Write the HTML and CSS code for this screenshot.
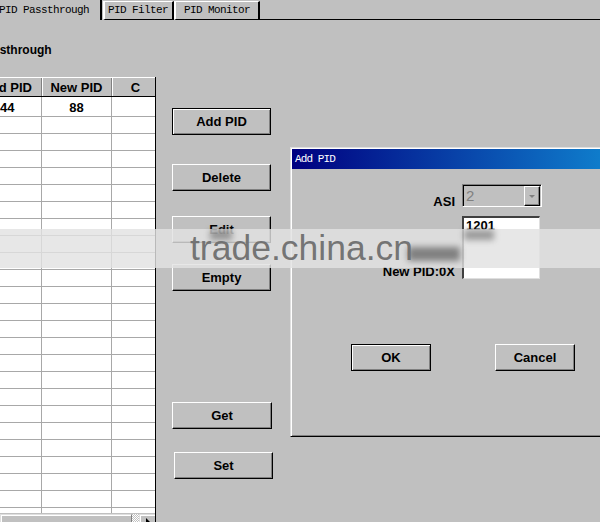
FILE: index.html
```html
<!DOCTYPE html>
<html>
<head>
<meta charset="utf-8">
<link rel="stylesheet" href="styles.css">
</head>
<body>
<div class="tabs">
  <div class="tab tab-active">PID Passthrough</div>
  <div class="tab tab-filter">PID Filter</div>
  <div class="tab tab-monitor">PID Monitor</div>
  <div class="tab-fill"></div>
</div>

<div class="panel">
  <div class="left">
    <h1 class="title">PID Passthrough</h1>
    <div class="grid">
      <div class="grid-scroll">
        <div class="rows">
          <div class="row head"><div class="c c1">Old PID</div><div class="c c2">New PID</div><div class="c c3">C</div></div>
          <div class="row first"><div class="c c1 left-val">44</div><div class="c c2">88</div><div class="c c3"></div></div>
          <div class="row"><div class="c c1"></div><div class="c c2"></div><div class="c c3"></div></div>
          <div class="row"><div class="c c1"></div><div class="c c2"></div><div class="c c3"></div></div>
          <div class="row"><div class="c c1"></div><div class="c c2"></div><div class="c c3"></div></div>
          <div class="row"><div class="c c1"></div><div class="c c2"></div><div class="c c3"></div></div>
          <div class="row"><div class="c c1"></div><div class="c c2"></div><div class="c c3"></div></div>
          <div class="row"><div class="c c1"></div><div class="c c2"></div><div class="c c3"></div></div>
          <div class="row"><div class="c c1"></div><div class="c c2"></div><div class="c c3"></div></div>
          <div class="row"><div class="c c1"></div><div class="c c2"></div><div class="c c3"></div></div>
          <div class="row"><div class="c c1"></div><div class="c c2"></div><div class="c c3"></div></div>
          <div class="row"><div class="c c1"></div><div class="c c2"></div><div class="c c3"></div></div>
          <div class="row"><div class="c c1"></div><div class="c c2"></div><div class="c c3"></div></div>
          <div class="row"><div class="c c1"></div><div class="c c2"></div><div class="c c3"></div></div>
          <div class="row"><div class="c c1"></div><div class="c c2"></div><div class="c c3"></div></div>
          <div class="row"><div class="c c1"></div><div class="c c2"></div><div class="c c3"></div></div>
          <div class="row"><div class="c c1"></div><div class="c c2"></div><div class="c c3"></div></div>
          <div class="row"><div class="c c1"></div><div class="c c2"></div><div class="c c3"></div></div>
          <div class="row"><div class="c c1"></div><div class="c c2"></div><div class="c c3"></div></div>
          <div class="row"><div class="c c1"></div><div class="c c2"></div><div class="c c3"></div></div>
          <div class="row"><div class="c c1"></div><div class="c c2"></div><div class="c c3"></div></div>
          <div class="row"><div class="c c1"></div><div class="c c2"></div><div class="c c3"></div></div>
          <div class="row"><div class="c c1"></div><div class="c c2"></div><div class="c c3"></div></div>
          <div class="row"><div class="c c1"></div><div class="c c2"></div><div class="c c3"></div></div>
          <div class="row"><div class="c c1"></div><div class="c c2"></div><div class="c c3"></div></div>
          <div class="row"><div class="c c1"></div><div class="c c2"></div><div class="c c3"></div></div>
        </div>
      </div>
      <div class="hscroll">
        <div class="hs-thumb"></div>
        <div class="hs-track"></div>
        <div class="hs-btn">
          <svg width="14" height="14" viewBox="0 0 14 14"><polygon points="5,3 9,7 5,11" fill="#000"/></svg>
        </div>
      </div>
    </div>
  </div>

  <div class="buttons">
    <div class="btn btn-default b-add">Add PID</div>
    <div class="btn b-delete">Delete</div>
    <div class="btn b-edit">Edit</div>
    <div class="btn b-empty">Empty</div>
    <div class="btn b-get">Get</div>
    <div class="btn b-set">Set</div>
  </div>
</div>

<div class="dialog">
  <div class="titlebar">Add PID</div>
  <div class="dlg-body">
    <div class="form">
      <span class="lbl">ASI</span>
      <div class="combo">
        <span class="combo-val">2</span>
        <span class="combo-btn">
          <svg width="14" height="16" viewBox="0 0 14 16"><polygon points="4,7 10,7 7,10" fill="#808080"/></svg>
        </span>
      </div>
      <span class="lbl"></span>
      <div class="field field-top">1201</div>
      <span class="lbl">New PID:0X</span>
      <div class="field field-bottom"></div>
    </div>
    <div class="dlg-buttons">
      <div class="btn btn-default btn-dlg">OK</div>
      <div class="btn btn-dlg">Cancel</div>
    </div>
  </div>
</div>

<div class="watermark">
  <span class="smudge smudge-edit"></span>
  <span class="smudge smudge-num"></span>
  <span class="smudge smudge-label"></span>
  <span class="wm-text">trade.china.cn</span>
</div>
</body>
</html>
```

FILE: styles.css
```css
* { box-sizing: border-box; }

html, body { margin: 0; padding: 0; }

body {
  width: 600px;
  height: 522px;
  overflow: hidden;
  position: relative;
  background: #c0c0c0;
  color: #000;
  font: bold 13px "Liberation Sans", Arial, sans-serif;
}

/* ---------- tabs ---------- */
.tabs {
  display: flex;
  align-items: flex-end;
  height: 20px;
}

.tab {
  font: 11px "Liberation Mono", "DejaVu Sans Mono", monospace;
  letter-spacing: -0.6px;
  line-height: 13px;
  white-space: nowrap;
  color: #000;
}

.tab-active {
  height: 20px;
  margin-left: -8px;
  padding: 4px 11px 0 7px;
  border-right: 2px solid #000;
}

.tab-filter,
.tab-monitor {
  height: 19px;
  padding-top: 2px;
  border-top: 1px solid #fff;
  border-left: 2px solid #fff;
  border-right: 2px solid #000;
  border-bottom: 1px solid #000;
}

.tab-filter { margin-left: 1px; padding-left: 3px; padding-right: 4px; }
.tab-monitor { padding-left: 8px; padding-right: 8px; }

.tab-fill {
  flex: 1;
  height: 1px;
  background: #000;
}

/* ---------- panel ---------- */
.panel {
  display: flex;
}

.left {
  width: 156px;
  flex: none;
}

.title {
  margin: 23px 0 0 -45px;
  font: bold 12px "Liberation Sans", Arial, sans-serif;
  line-height: 15px;
  white-space: nowrap;
}

.grid {
  margin-top: 19px;
  width: 156px;
  border-right: 1px solid #000;
}

.grid-scroll {
  height: 436px;
  overflow: hidden;
  background: #fff;
}

.rows {
  margin-left: -24px;
  width: 184px;
}

.row {
  display: flex;
  height: 17px;
  border-bottom: 1px solid #a8a8a8;
}

.row.head {
  height: 20px;
  background: #c0c0c0;
  border-top: 1px solid #fff;
  border-bottom: 1px solid #000;
}

.row.first { height: 20px; }

.c {
  flex: none;
  border-right: 1px solid #a8a8a8;
  text-align: center;
  white-space: nowrap;
  overflow: hidden;
}

.c1 { width: 66px; }
.c2 { width: 70px; }
.c3 { width: 48px; }

.head .c {
  border-right: 1px solid #808080;
  box-shadow: inset 1px 0 #fff;
  padding-top: 1px;
  line-height: 17px;
}

.first .c {
  padding-top: 2px;
  line-height: 17px;
}

.first .left-val {
  text-align: left;
  padding-left: 24px;
}

.hscroll {
  display: flex;
  height: 16px;
  border-top: 1px solid #c0c0c0;
}

.hs-thumb {
  flex: 1;
  background: #c0c0c0;
  border-top: 1px solid #dfdfdf;
  border-left: 1px solid #dfdfdf;
  border-right: 1px solid #808080;
  box-shadow: inset 1px 1px #fff;
}

.hs-track {
  width: 7px;
  background: repeating-conic-gradient(#fff 0 25%, #c0c0c0 0 50%) 0 0 / 2px 2px;
}

.hs-btn {
  width: 16px;
  background: #c0c0c0;
  border-top: 1px solid #dfdfdf;
  border-left: 1px solid #dfdfdf;
  box-shadow: inset 1px 1px #fff;
  display: flex;
  align-items: flex-start;
  justify-content: center;
}

/* ---------- buttons ---------- */
.buttons {
  display: flex;
  flex-direction: column;
  align-items: flex-start;
  padding-left: 16px;
}

.btn {
  width: 100px;
  height: 27px;
  display: flex;
  align-items: center;
  justify-content: center;
  background: #c0c0c0;
  border: 1px solid;
  border-color: #fff #000 #000 #fff;
  box-shadow: inset -1px -1px #808080;
  font: bold 13px "Liberation Sans", Arial, sans-serif;
  white-space: nowrap;
}

.btn-default {
  border-color: #000;
  box-shadow: inset 1px 1px #fff, inset -1px -1px #808080;
}

.b-add { margin-top: 88px; width: 99px; }
.b-delete { margin-top: 29px; width: 99px; }
.b-edit { margin-top: 25px; width: 99px; }
.b-empty { margin-top: 21px; width: 99px; }
.b-get { margin-top: 111px; }
.b-set { margin-top: 23px; margin-left: 2px; width: 99px; }

/* ---------- dialog ---------- */
.dialog {
  position: absolute;
  left: 290px;
  top: 147px;
  width: 330px;
  height: 290px;
  background: #c0c0c0;
  border-top: 1px solid #dfdfdf;
  border-left: 1px solid #dfdfdf;
  border-bottom: 1px solid #000;
  box-shadow: inset 1px 1px #fff, inset 0 -1px #808080;
  padding: 1px 0 0 1px;
}

.titlebar {
  height: 20px;
  padding: 4px 0 0 3px;
  background: linear-gradient(to right, #000080, #1084d0);
  color: #fff;
  font: 11px "Liberation Mono", "DejaVu Sans Mono", monospace;
  letter-spacing: -0.9px;
  line-height: 13px;
  white-space: nowrap;
}

.dlg-body {
  padding-top: 15px;
}

.form {
  display: grid;
  grid-template-columns: 163px 80px;
  grid-template-rows: 32px 32px 31px;
  column-gap: 7px;
}

.form .combo { margin-bottom: 9px; }

.lbl {
  text-align: right;
  white-space: nowrap;
  line-height: 15px;
}

.lbl:nth-child(1) { align-self: start; padding-top: 10px; }
.lbl:nth-child(5) { align-self: end; margin-bottom: 0; }

.combo {
  height: 23px;
  display: flex;
  align-items: center;
  justify-content: space-between;
  border-top: 1px solid #808080;
  border-left: 1px solid #808080;
  border-right: 1px solid #fff;
  border-bottom: 1px solid #fff;
  box-shadow: inset 1px 1px #000;
  padding: 1px 1px 1px 3px;
}

.combo-val {
  font: 15px "Liberation Sans", Arial, sans-serif;
  color: #808080;
  line-height: 17px;
}

.combo-btn {
  width: 16px;
  height: 20px;
  display: flex;
  align-items: center;
  justify-content: center;
  background: #c0c0c0;
  border: 1px solid;
  border-color: #fff #000 #000 #fff;
  box-shadow: inset -1px -1px #808080;
}

.field {
  width: 78px;
  background: #fff;
  border-left: 2px solid #404040;
  border-right: 1px solid #dfdfdf;
  padding: 0 2px;
  line-height: 15px;
}

.field-top {
  border-top: 2px solid #404040;
}

.field-bottom {
  border-bottom: 1px solid #dfdfdf;
}

.dlg-buttons {
  display: flex;
  gap: 64px;
  margin-top: 65px;
  padding-left: 59px;
}

.btn-dlg { width: 80px; }

/* ---------- watermark overlay ---------- */
.watermark {
  position: absolute;
  left: 0;
  top: 229px;
  width: 600px;
  height: 39px;
  background: rgba(226, 226, 226, 0.82);
}

.wm-text {
  position: absolute;
  left: 190px;
  top: 0;
  font: 35.5px "Liberation Sans", Arial, sans-serif;
  line-height: 39px;
  color: rgba(110, 110, 110, 0.95);
  white-space: nowrap;
}

.smudge {
  position: absolute;
  background: #5a5a5a;
  filter: blur(3px);
  opacity: 0.55;
}

.smudge-edit { left: 210px; top: 1px; width: 22px; height: 10px; }
.smudge-num { left: 464px; top: 1px; width: 30px; height: 10px; }
.smudge-label { left: 408px; top: 18px; width: 52px; height: 14px; opacity: 0.7; }
```
